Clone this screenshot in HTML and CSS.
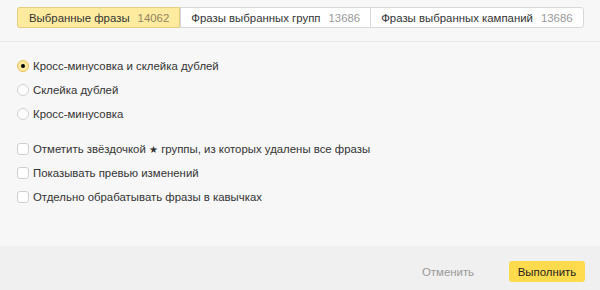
FILE: index.html
```html
<!DOCTYPE html>
<html>
<head>
<meta charset="utf-8">
<link rel="stylesheet" href="styles.css">
</head>
<body>
    <div class="dialog">
        <div class="head">
            <div class="tabs">
                <div class="tab tab-active">Выбранные фразы<span class="count">14062</span></div>
                <div class="tab">Фразы выбранных групп<span class="count">13686</span></div>
                <div class="tab">Фразы выбранных кампаний<span class="count">13686</span></div>
            </div>
        </div>
        <div class="body">
            <div class="group">
                <div class="row"><span class="radio radio-on"></span>Кросс-минусовка и склейка дублей</div>
                <div class="row"><span class="radio"></span>Склейка дублей</div>
                <div class="row"><span class="radio"></span>Кросс-минусовка</div>
            </div>
            <div class="group">
                <div class="row"><span class="check"></span>Отметить звёздочкой&nbsp;<span class="star">★</span>&nbsp;группы, из которых удалены все фразы</div>
                <div class="row"><span class="check"></span>Показывать превью изменений</div>
                <div class="row"><span class="check"></span>Отдельно обрабатывать фразы в кавычках</div>
            </div>
        </div>
        <div class="foot">
            <button class="btn btn-cancel">Отменить</button>
            <button class="btn btn-ok">Выполнить</button>
        </div>
    </div>
</body>
</html>
```
FILE: styles.css
```css
body {
    margin: 0;
    font-family: "Liberation Sans", Arial, sans-serif;
    font-size: 11.4px;
    color: #333;
    background: #f7f7f7;
}

.dialog {
    display: flex;
    flex-direction: column;
    height: 290px;
}

.head {
    padding: 7px 16px 13px 17px;
    border-bottom: 1px solid #e6e6e6;
}

.tabs {
    display: flex;
    height: 21px;
    width: 567px;
    border: 1px solid #d9d9d9;
    border-radius: 3px;
    background: #fff;
    box-sizing: border-box;
}

.tab {
    display: flex;
    align-items: center;
    padding: 0 10px 0 10px;
    border-left: 1px solid #d9d9d9;
    white-space: nowrap;
}

.tab:last-child {
    flex: 1;
}

.tab-active {
    background: #ffeba0;
    margin: -1px 0 -1px -1px;
    padding: 0 10px 0 11px;
    border: 1px solid #e5cf7f;
    border-radius: 3px 0 0 3px;
}

.count {
    color: #999;
    margin-left: 8px;
}

.tab-active .count {
    color: #8f8462;
}

.body {
    flex: 1;
    padding: 12px 17px 0;
}

.group {
    margin-bottom: 11px;
}

.row {
    display: flex;
    align-items: center;
    height: 24px;
}

.radio {
    width: 12px;
    height: 12px;
    box-sizing: border-box;
    border: 1px solid #cfcfcf;
    border-radius: 50%;
    background: #fff;
    margin-right: 4px;
    position: relative;
    flex: none;
}

.radio-on {
    border-color: #e8c14e;
    background: #ffe9a0;
}

.radio-on::after {
    content: "";
    position: absolute;
    left: 3px;
    top: 3px;
    width: 4px;
    height: 4px;
    border-radius: 50%;
    background: #000;
}

.check {
    width: 12px;
    height: 12px;
    box-sizing: border-box;
    border: 1px solid #cfcfcf;
    border-radius: 3px;
    background: #fff;
    margin-right: 4px;
    flex: none;
}

.star {
    font-size: 10px;
}

.foot {
    display: flex;
    justify-content: flex-end;
    align-items: flex-start;
    height: 44px;
    padding: 15px 15px 0 0;
    box-sizing: border-box;
    background: #f0f0f0;
}

.btn {
    font-family: inherit;
    font-size: 11.4px;
    height: 21px;
    border: none;
    border-radius: 3px;
    padding: 0;
    cursor: pointer;
}

.btn-cancel {
    background: none;
    color: #999;
    width: 52px;
    margin-right: 35px;
}

.btn-ok {
    background: #ffdb4d;
    color: #222;
    width: 76px;
}
```
